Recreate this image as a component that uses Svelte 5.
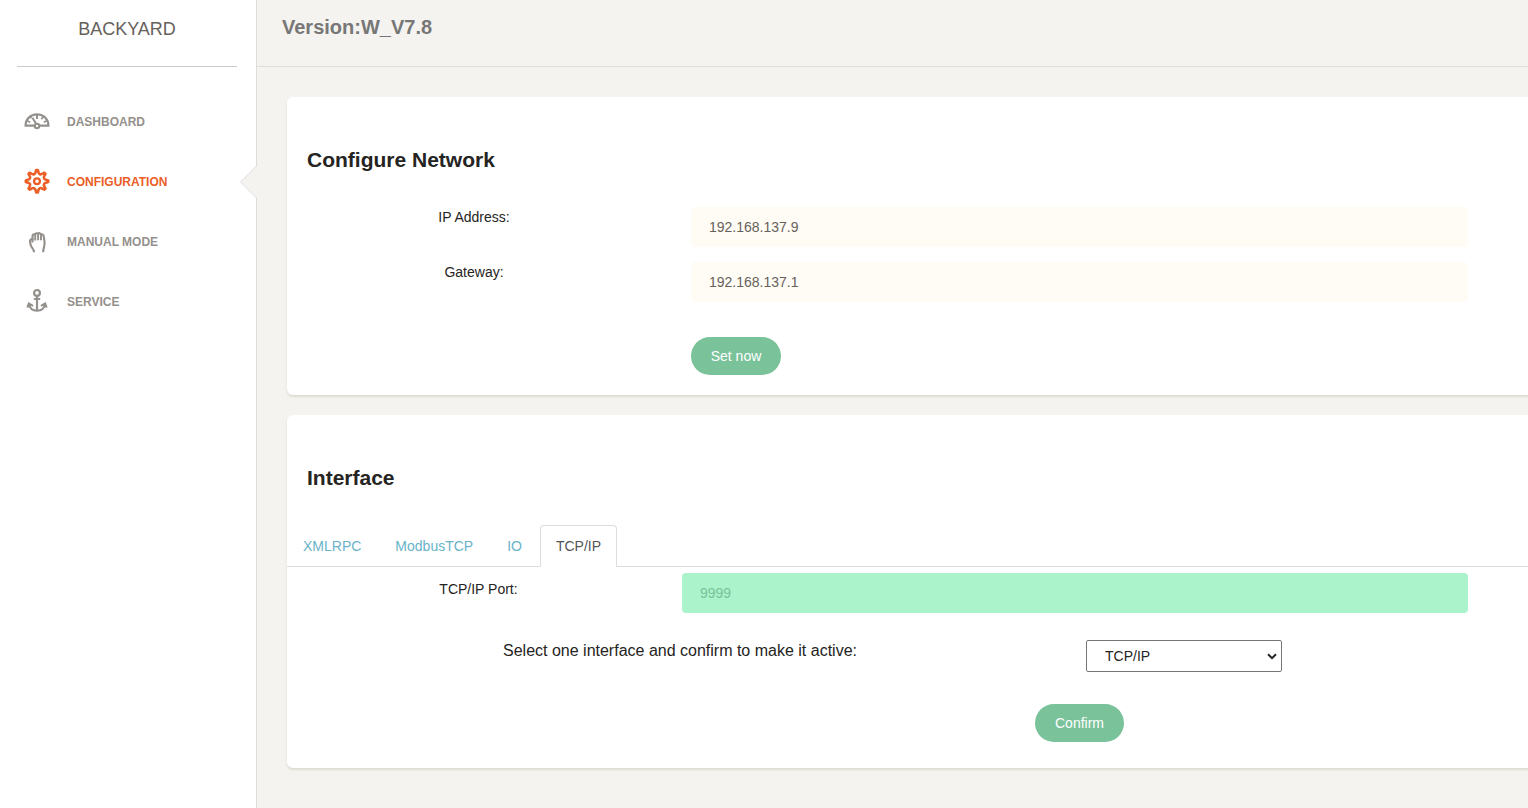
<script>
  const menu = [
    { icon: 'dashboard', label: 'Dashboard' },
    { icon: 'settings', label: 'Configuration', active: true },
    { icon: 'hand', label: 'Manual mode' },
    { icon: 'anchor', label: 'Service' }
  ];
  const tabs = ['XMLRPC', 'ModbusTCP', 'IO', 'TCP/IP'];
  let current = $state('TCP/IP');
  let selected = $state('TCP/IP');
  let network = $state([
    { label: 'IP Address:', value: '192.168.137.9' },
    { label: 'Gateway:', value: '192.168.137.1' }
  ]);

  // Eight narrow teeth joined by rounded valleys, centred on (13, 13.2).
  function gearPath() {
    const at = (x, y, turn) => {
      const a = (turn * Math.PI) / 4;
      const px = 13 + x * Math.cos(a) - y * Math.sin(a);
      const py = 13.2 + x * Math.sin(a) + y * Math.cos(a);
      return `${px.toFixed(2)} ${py.toFixed(2)}`;
    };
    let d = '';
    for (let i = 0; i < 8; i++) {
      d += `${i ? 'L' : 'M'}${at(-0.8, -11.2, i)}L${at(0.8, -11.2, i)}L${at(1.5, -8.9, i)}`;
      d += `A2.3 2.3 0 0 0 ${at(-1.5, -8.9, i + 1)}`;
    }
    return d + 'Z';
  }
  const gear = gearPath();
</script>

<div class="page">
  <aside>
    <div class="brand">BACKYARD</div>
    <nav>
      {#each menu as item}
        <div class="item" class:active={item.active}>
          <svg viewBox="0 0 26 26" width="26" height="26" fill="none" stroke="currentColor">
            {#if item.icon === 'dashboard'}
              <path stroke-width="2.200" d="M10.3 17.6H1.600c0-6.300 4.700-11.300 11.400-11.300s11.400 5 11.400 11.300h-8.700" />
              <circle cx="13" cy="18" r="2.200" stroke-width="2.100" />
              <path stroke-width="2" d="M12.200 16 8.500 9.800M13 6v5" />
              <path stroke-width="1.700" d="M3 12.800l3.200 1.500M23 12.800l-3.200 1.500M19.600 8.300l-2.300 2.900M6 8.700l1.400 1.600" />
            {:else if item.icon === 'settings'}
              <path stroke-width="2.600" stroke-linejoin="round" d={gear} />
              <circle cx="13" cy="13.200" r="2.900" stroke-width="2.300" />
            {:else if item.icon === 'hand'}
              <path stroke-width="2.100" stroke-linejoin="round" d="M10 24.200c0-3.700-3-4.400-3.400-7.500l-.6-3.200c-.3-1.800 1.200-2.600 2.500-1.700V8.100c0-1.600 1.500-2.200 2.500-1.400.4-1.700 2.400-1.800 3-.9.9-1.200 2.600-.7 2.900.7 1.400-.5 2.600.1 2.800 1.600l.8 5.600c.7 4.600-1.300 5.400-1.300 10.500" />
              <path stroke-width="1.900" d="M8.500 10.500v4M11.200 6.500v6M14.100 5.800v6.500M17 6.500v5.800" />
            {:else}
              <circle cx="13" cy="4.900" r="2.900" stroke-width="2.200" />
              <path stroke-width="2.200" d="M13 8v15M9.800 11h6.400" />
              <path stroke-width="2" d="M4.900 16.200c.7 4.200 4 6.500 8.100 6.500s7.400-2.300 8.100-6.500M3.400 19.600l1.400-4.200 4.300 2.400M22.600 19.600l-1.400-4.200-4.300 2.400" />
            {/if}
          </svg>
          <span>{item.label}</span>
        </div>
      {/each}
    </nav>
  </aside>

  <main>
    <header>Version:W_V7.8</header>
    <div class="content">
      <section class="network">
        <h4>Configure Network</h4>
        <div class="fields">
          {#each network as field}
            <div class="row">
              <label for={field.label}>{field.label}</label>
              <input id={field.label} bind:value={field.value} />
            </div>
          {/each}
        </div>
        <button class="set">Set now</button>
      </section>

      <section class="interface">
        <h4>Interface</h4>
        <div class="tabs">
          {#each tabs as tab}
            <button class="tab" class:current={tab === current} onclick={() => (current = tab)}>{tab}</button>
          {/each}
        </div>
        <div class="row port">
          <label for="port">TCP/IP Port:</label>
          <input id="port" class="locked" value="9999" readonly />
        </div>
        <div class="choose">
          <label for="active">Select one interface and confirm to make it active:</label>
          <div class="select">
            <select id="active" bind:value={selected}>
              {#each tabs as tab}<option>{tab}</option>{/each}
            </select>
            <svg viewBox="0 0 10 7" width="10" height="7" fill="none" stroke="#252422" stroke-width="2">
              <path d="M1 1.200 5 5.200l4-4" />
            </svg>
          </div>
        </div>
        <button class="confirm">Confirm</button>
      </section>
    </div>
  </main>
</div>

<style>
  :global(body) { margin: 0; overflow: hidden; }
  .page {
    display: flex;
    height: 808px;
    overflow: hidden;
    background: #f4f3ef;
    color: #252422;
    font: 14px/20px "Liberation Sans", Arial, sans-serif;
  }
  .page * { box-sizing: border-box; }
  aside { width: 257px; flex: none; background: #fff; border-right: 1px solid #ddd; }
  .brand {
    height: 67px;
    margin: 0 19px 0 17px;
    padding-top: 14px;
    border-bottom: 1px solid #ccc;
    color: #66615b;
    font-size: 18px;
    line-height: 30px;
    text-align: center;
  }
  nav { padding-top: 24px; }
  .item {
    position: relative;
    display: flex;
    align-items: center;
    gap: 17px;
    height: 60px;
    padding-left: 24px;
    color: #94908c;
    font-size: 12px;
    font-weight: 700;
    text-transform: uppercase;
  }
  .item svg { flex: none; }
  .item span { padding-top: 2px; }
  .item.active { color: #eb5e28; }
  .item.active::before, .item.active::after {
    content: "";
    position: absolute;
    right: -1px;
    top: 14px;
    border: 17px solid transparent;
    border-left-width: 0;
    border-right-color: #ddd;
  }
  .item.active::after { right: -2px; border-right-color: #f4f3ef; }
  main { width: 1271px; flex: none; }
  header {
    height: 67px;
    padding: 12px 25px;
    border-bottom: 1px solid #ddd;
    color: #777;
    font-size: 20px;
    font-weight: 700;
    line-height: 30px;
  }
  .content { display: flex; flex-direction: column; gap: 20px; width: 1300px; padding: 30px 0 0 30px; }
  section { background: #fff; border-radius: 6px; box-shadow: 0 2px 2px rgba(204, 197, 185, .5); }
  .network { height: 298px; padding-top: 48px; }
  .interface { height: 353px; padding-top: 48px; }
  h4 { margin: 0; padding-left: 20px; font-size: 21px; font-weight: 700; line-height: 30px; }
  .fields { display: grid; gap: 15px; margin-top: 32px; }
  .row { display: grid; grid-template-columns: 374px 777px; column-gap: 30px; }
  .row label { text-align: center; }
  input {
    width: 100%;
    height: 40px;
    padding: 0 18px;
    border: 0;
    border-radius: 4px;
    outline: 0;
    background: #fffcf5;
    color: #66615b;
    font: inherit;
  }
  .set, .confirm {
    display: block;
    height: 38px;
    padding: 0;
    border: 0;
    border-radius: 20px;
    background: #7ac29a;
    color: #fff;
    font: inherit;
  }
  .set { width: 90px; margin: 35px 0 0 404px; }
  .tabs { display: flex; height: 42px; margin-top: 32px; border-bottom: 1px solid #ddd; }
  .tab {
    height: 42px;
    margin-right: 2px;
    padding: 0 15px;
    border: 1px solid transparent;
    border-radius: 4px 4px 0 0;
    background: none;
    color: #68b3c8;
    font: inherit;
  }
  .tab.current { border-color: #ddd; border-bottom-color: #fff; background: #fff; color: #555; }
  .port { grid-template-columns: 383px 786px; column-gap: 12px; margin-top: 6px; }
  .port label { padding-top: 6px; }
  .locked { background: #abf3cb; color: #7ac29a; }
  .choose { display: grid; grid-template-columns: 786px 196px; column-gap: 13px; margin-top: 27px; }
  .choose label { padding-top: 1px; font-size: 16px; text-align: center; }
  .select { display: grid; align-items: center; }
  .select > * { grid-area: 1 / 1; }
  .select svg { justify-self: end; margin: 1px 5px 0 0; pointer-events: none; }
  select {
    appearance: none;
    width: 100%;
    height: 32px;
    padding: 0 0 0 18px;
    border: 1px solid #767676;
    border-radius: 2px;
    background: #fff;
    color: #252422;
    font: inherit;
  }
  .confirm { width: 89px; margin: 32px 0 0 748px; }
</style>
